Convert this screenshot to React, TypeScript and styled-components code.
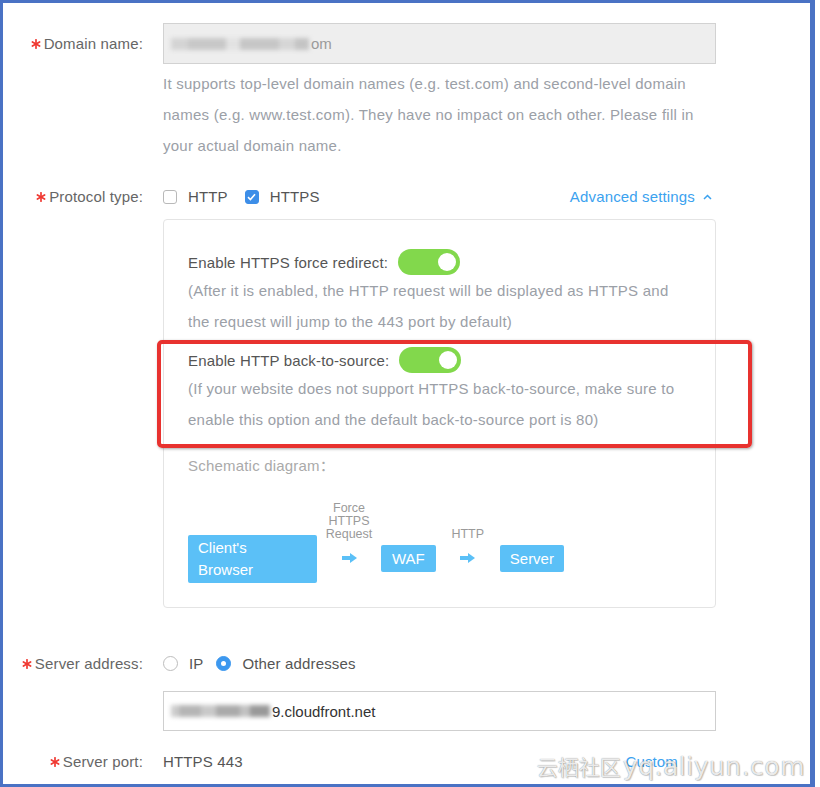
import React from "react";
import styled, { createGlobalStyle } from "styled-components";

const GlobalStyle = createGlobalStyle`
  body {
    margin: 0;
    background: #fff;
    font-family: "Liberation Sans", Arial, "Noto Sans CJK SC", sans-serif;
  }
`;

const Frame = styled.div`
  position: relative;
  width: 815px;
  height: 787px;
  box-sizing: border-box;
  border: 3px solid #4a72c4;
  border-right-width: 5px;
  padding-top: 20px;
  overflow: hidden;
`;

const Row = styled.div<{ $top?: number }>`
  display: grid;
  grid-template-columns: 140px 553px;
  column-gap: 20px;
  margin-top: ${(p) => p.$top ?? 0}px;
`;

const Label = styled.div<{ $h?: number }>`
  display: flex;
  justify-content: flex-end;
  align-items: center;
  gap: 3px;
  height: ${(p) => p.$h ?? 31}px;
  font-size: 15px;
  letter-spacing: 0.15px;
  color: #666;
`;

const Field = styled.div<{ $disabled?: boolean; $h?: number }>`
  height: ${(p) => p.$h ?? 41}px;
  box-sizing: border-box;
  border: 1px solid ${(p) => (p.$disabled ? "#d2d2d2" : "#cfcfcf")};
  background: ${(p) => (p.$disabled ? "#eeeeee" : "#fff")};
  display: flex;
  align-items: center;
  padding-left: 7px;
  font-size: 15px;
  color: ${(p) => (p.$disabled ? "#9a9a9a" : "#333")};
`;

/* masked part of a value: blurred grey patches, as in the screenshot */
const Smudge = styled.span<{ $w: number; $dark?: boolean }>`
  display: inline-block;
  width: ${(p) => p.$w}px;
  height: 12px;
  margin-right: 2px;
  filter: blur(2px);
  background: ${(p) =>
    p.$dark
      ? "linear-gradient(90deg, #ccc 0 8%, #b5b5b5 8% 30%, #c9c9c9 30% 45%, #aaa 45% 70%, #c2c2c2 70% 80%, #999 80% 100%)"
      : "linear-gradient(90deg, #d4d4d4 0 12%, #c8c8c8 12% 40%, #e2e2e2 40% 50%, #c6c6c6 50% 78%, #d6d6d6 78% 90%, #c4c4c4 90% 100%)"};
`;

const Help = styled.div<{ $top?: number }>`
  grid-column: 2;
  margin-top: ${(p) => p.$top ?? 0}px;
  font-size: 15px;
  letter-spacing: 0.25px;
  line-height: 31px;
  color: #9ba0a7;
`;

const Line = styled.div`
  display: flex;
  align-items: center;
  height: 31px;
  font-size: 15px;
  letter-spacing: 0.15px;
  color: #555;
`;

const Option = styled.label<{ $space?: number }>`
  display: flex;
  align-items: center;
  gap: 11px;
  margin-right: ${(p) => p.$space ?? 17}px;
`;

const Box = styled.span<{ $on?: boolean }>`
  width: 14px;
  height: 14px;
  box-sizing: border-box;
  border-radius: 3px;
  border: 1px solid ${(p) => (p.$on ? "#3d8ee8" : "#b9b9b9")};
  background: ${(p) => (p.$on ? "#3d8ee8" : "#fff")};
  display: flex;
  align-items: center;
  justify-content: center;
`;

const Radio = styled.span<{ $on?: boolean }>`
  width: 15px;
  height: 15px;
  box-sizing: border-box;
  border-radius: 50%;
  border: 1px solid ${(p) => (p.$on ? "#3c98ef" : "#bdbdbd")};
  background: ${(p) => (p.$on ? "#3c98ef" : "#fff")};
  display: flex;
  align-items: center;
  justify-content: center;
  &::after {
    content: "";
    width: 5px;
    height: 5px;
    border-radius: 50%;
    background: ${(p) => (p.$on ? "#fff" : "transparent")};
  }
`;

const Link = styled.span<{ $right?: number }>`
  display: flex;
  align-items: center;
  gap: 8px;
  color: #3ba2ef;
  font-size: 15px;
  margin-left: auto;
  margin-right: ${(p) => p.$right ?? 4}px;
`;

const Panel = styled.div`
  grid-column: 2;
  margin-top: 7px;
  border: 1px solid #e4e4e4;
  border-radius: 4px;
  padding: 29px 24px 24px;
`;

const Section = styled.div<{ $top?: number }>`
  position: relative;
  margin-top: ${(p) => p.$top ?? 0}px;
`;

const ToggleRow = styled.div`
  display: flex;
  align-items: center;
  gap: 10px;
  height: 26px;
  font-size: 15px;
  letter-spacing: 0.15px;
  color: #555;
`;

const Toggle = styled.span`
  width: 62px;
  height: 26px;
  box-sizing: border-box;
  border-radius: 13px;
  background: #82d84c;
  display: flex;
  align-items: center;
  justify-content: flex-end;
  padding-right: 4px;
  &::after {
    content: "";
    width: 18px;
    height: 18px;
    border-radius: 50%;
    background: #fff;
  }
`;

const Note = styled.div`
  font-size: 15px;
  letter-spacing: 0.25px;
  line-height: 31px;
  color: #9ba0a7;
`;

const Highlight = styled.div`
  position: absolute;
  top: -7px;
  bottom: -13px;
  left: -31px;
  right: -61px;
  border: 4px solid #e8322f;
  border-radius: 5px;
  box-shadow: 1px 1px 3px rgba(0, 0, 0, 0.35);
  pointer-events: none;
`;

const Caption = styled.div`
  margin-top: 15px;
  font-size: 15px;
  letter-spacing: 0.2px;
  line-height: 31px;
  color: #aaa;
`;

const Diagram = styled.div`
  display: flex;
  align-items: flex-end;
  margin-top: 21px;
`;

const Node = styled.div<{ $w?: number; $h: number; $pad: number; $bottom?: number }>`
  ${(p) => (p.$w ? `width: ${p.$w}px;` : "")}
  height: ${(p) => p.$h}px;
  box-sizing: border-box;
  padding: 0 ${(p) => p.$pad}px;
  margin-bottom: ${(p) => p.$bottom ?? 0}px;
  background: #5bc0f7;
  border-radius: 2px;
  color: #fff;
  font-size: 15px;
  line-height: ${(p) => (p.$h > 30 ? 22 : p.$h)}px;
  display: flex;
  flex-direction: column;
  justify-content: center;
`;

const Connector = styled.div`
  width: 64px;
  display: flex;
  flex-direction: column;
  align-items: center;
  margin-bottom: 20px;
  gap: 12px;
`;

const ConnectorLabel = styled.div`
  font-size: 12.5px;
  line-height: 13px;
  color: #9a9a9a;
  text-align: center;
`;

const Value = styled.span`
  color: #555;
`;

const Watermark = styled.div`
  position: absolute;
  right: 5px;
  bottom: 3px;
  display: flex;
  align-items: baseline;
  gap: 2px;
  color: rgba(255, 255, 255, 0.85);
  text-shadow: 0 0 1px rgba(0, 0, 0, 0.5), 1px 1px 1px rgba(0, 0, 0, 0.18);
  pointer-events: none;
  white-space: nowrap;
`;

const WmCn = styled.span`
  font-family: "Noto Sans CJK SC", sans-serif;
  font-size: 21px;
`;

const WmEn = styled.span`
  font-family: "DejaVu Sans", sans-serif;
  font-size: 25px;
  letter-spacing: 0.5px;
`;

const Asterisk = () => (
  <svg width="10" height="10" viewBox="0 0 10 10">
    <g stroke="#f03a33" strokeWidth="1.7" strokeLinecap="round">
      <line x1="5" y1="0.8" x2="5" y2="9.2" />
      <line x1="1.4" y1="2.9" x2="8.6" y2="7.1" />
      <line x1="1.4" y1="7.1" x2="8.6" y2="2.9" />
    </g>
  </svg>
);

const Check = () => (
  <svg width="9" height="8" viewBox="0 0 9 8">
    <path d="M1 4.2 L3.4 6.5 L8 1.3" fill="none" stroke="#fff" strokeWidth="1.6" />
  </svg>
);

const ChevronUp = () => (
  <svg width="9" height="6" viewBox="0 0 9 6">
    <path d="M1 5 L4.5 1.5 L8 5" fill="none" stroke="#3ba2ef" strokeWidth="1.5" />
  </svg>
);

const Arrow = () => (
  <svg width="15" height="10" viewBox="0 0 15 10">
    <rect x="0" y="3" width="9" height="4" fill="#5bc0f7" />
    <polygon points="8,0 15,5 8,10" fill="#5bc0f7" />
  </svg>
);

const Required: React.FC<{ text: string; h?: number }> = ({ text, h }) => (
  <Label $h={h}>
    <Asterisk />
    {text}
  </Label>
);

export default function App() {
  return (
    <Frame>
      <GlobalStyle />
      <Row>
        <Required text="Domain name:" h={41} />
        <Field $disabled>
          <Smudge $w={138} />
          om
        </Field>
        <Help $top={4}>
          It supports top-level domain names (e.g. test.com) and second-level domain
          <br />
          names (e.g. www.test.com). They have no impact on each other. Please fill in
          <br />
          your actual domain name.
        </Help>
      </Row>

      <Row $top={20}>
        <Required text="Protocol type:" />
        <Line>
          <Option>
            <Box />
            HTTP
          </Option>
          <Option>
            <Box $on>
              <Check />
            </Box>
            HTTPS
          </Option>
          <Link>
            Advanced settings
            <ChevronUp />
          </Link>
        </Line>
        <Panel>
          <Section>
            <ToggleRow>
              Enable HTTPS force redirect:
              <Toggle />
            </ToggleRow>
            <Note>
              (After it is enabled, the HTTP request will be displayed as HTTPS and
              <br />
              the request will jump to the 443 port by default)
            </Note>
          </Section>
          <Section $top={10}>
            <ToggleRow>
              Enable HTTP back-to-source:
              <Toggle />
            </ToggleRow>
            <Note>
              (If your website does not support HTTPS back-to-source, make sure to
              <br />
              enable this option and the default back-to-source port is 80)
            </Note>
            <Highlight />
          </Section>
          <Caption>Schematic diagram：</Caption>
          <Diagram>
            <Node $w={129} $h={48} $pad={10}>
              <span>Client's</span>
              <span>Browser</span>
            </Node>
            <Connector>
              <ConnectorLabel>
                Force
                <br />
                HTTPS
                <br />
                Request
              </ConnectorLabel>
              <Arrow />
            </Connector>
            <Node $h={27} $pad={11} $bottom={11}>
              WAF
            </Node>
            <Connector>
              <ConnectorLabel>HTTP</ConnectorLabel>
              <Arrow />
            </Connector>
            <Node $h={27} $pad={10} $bottom={11}>
              Server
            </Node>
          </Diagram>
        </Panel>
      </Row>

      <Row $top={40}>
        <Required text="Server address:" />
        <Line>
          <Option $space={13}>
            <Radio />
            IP
          </Option>
          <Option $space={13}>
            <Radio $on />
            Other addresses
          </Option>
        </Line>
      </Row>

      <Row $top={12}>
        <div />
        <Field $h={40}>
          <Smudge $w={99} $dark />
          9.cloudfront.net
        </Field>
      </Row>

      <Row $top={15}>
        <Required text="Server port:" />
        <Line>
          <Value>HTTPS 443</Value>
          <Link $right={38}>Custom</Link>
        </Line>
      </Row>

      <Watermark>
        <WmCn>云栖社区</WmCn>
        <WmEn>yq.aliyun.com</WmEn>
      </Watermark>
    </Frame>
  );
}
